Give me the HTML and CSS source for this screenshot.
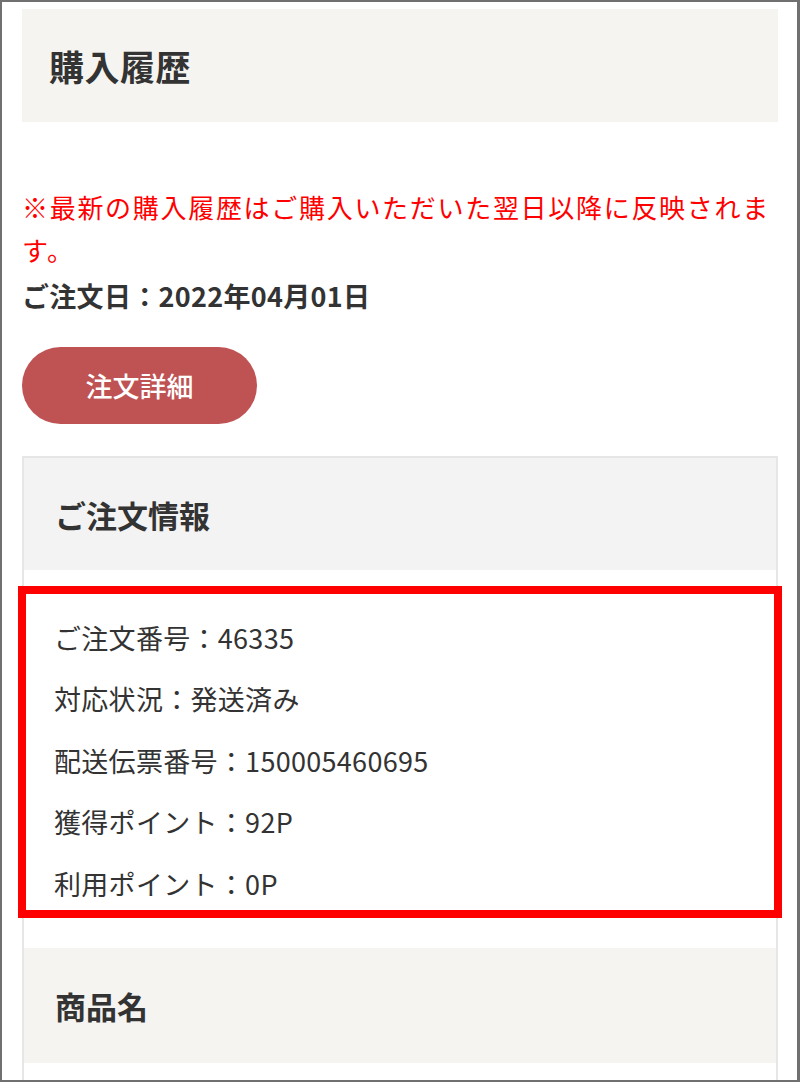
FILE: index.html
```html
<!DOCTYPE html>
<html lang="ja">
<head>
<meta charset="utf-8">
<title>購入履歴</title>
<link rel="stylesheet" href="styles.css">
</head>
<body>
<div class="frame">
  <h1 class="page-title">購入履歴</h1>
  <p class="notice">※最新の購入履歴はご購入いただいた翌日以降に反映されます。</p>
  <p class="order-date">ご注文日：2022年04月01日</p>
  <a class="btn-detail" href="#">注文詳細</a>
  <section class="card">
    <h2 class="card-head card-head-gray">ご注文情報</h2>
    <div class="card-body">
      <p class="row">ご注文番号：46335</p>
      <p class="row">対応状況：発送済み</p>
      <p class="row">配送伝票番号：150005460695</p>
      <p class="row">獲得ポイント：92P</p>
      <p class="row">利用ポイント：0P</p>
      <div class="highlight"></div>
    </div>
    <h2 class="card-head card-head-warm">商品名</h2>
    <div class="card-rest"></div>
  </section>
</div>
</body>
</html>
```

FILE: styles.css
```css
* { box-sizing: border-box; }
html, body { margin: 0; padding: 0; background: #fff; }
body {
  font-family: "Noto Sans CJK JP", "Noto Sans", sans-serif;
  color: #333;
}
.frame {
  width: 800px;
  height: 1082px;
  overflow: hidden;
  border-style: solid;
  border-color: #707070;
  border-width: 2px 3px 2px 2px;
  padding: 7px 19px 0 20px;
}
.page-title {
  margin: 0;
  height: 113px;
  background: #f5f4f0;
  display: flex;
  align-items: center;
  padding-left: 27px;
  font-size: 35px;
  font-weight: 700;
  letter-spacing: 0.5px;
  color: #333;
}
.notice {
  margin: 63px 0 0;
  color: #ff0000;
  font-size: 26px;
  letter-spacing: 1.7px;
  line-height: 43px;
}
.order-date {
  margin: 3px 0 0;
  font-size: 27px;
  font-weight: 700;
  letter-spacing: 0.3px;
  line-height: 43px;
  color: #333;
}
.btn-detail {
  margin-top: 30px;
  display: flex;
  align-items: center;
  justify-content: center;
  width: 235px;
  height: 77px;
  border-radius: 39px;
  background: #bf5252;
  color: #fff;
  text-decoration: none;
  font-size: 27px;
  font-weight: 500;
}
.card {
  margin-top: 32px;
  border: 2px solid #e6e6e6;
  border-bottom: none;
}
.card-head {
  margin: 0;
  display: flex;
  align-items: center;
  padding-left: 31px;
  font-size: 31px;
  font-weight: 700;
  color: #333;
}
.card-head-gray { height: 112px; background: #f3f3f3; }
.card-head-warm { height: 115px; background: #f5f4f0; }
.card-body {
  position: relative;
  padding: 36.75px 0 33.75px 30px;
}
.row {
  margin: 0;
  font-size: 27px;
  line-height: 61.5px;
  letter-spacing: 0.3px;
  color: #333;
}
.highlight {
  position: absolute;
  top: 16px;
  left: -6px;
  right: -6px;
  height: 332px;
  border: 8px solid #ff0000;
  pointer-events: none;
}
.card-rest { height: 60px; }
```
